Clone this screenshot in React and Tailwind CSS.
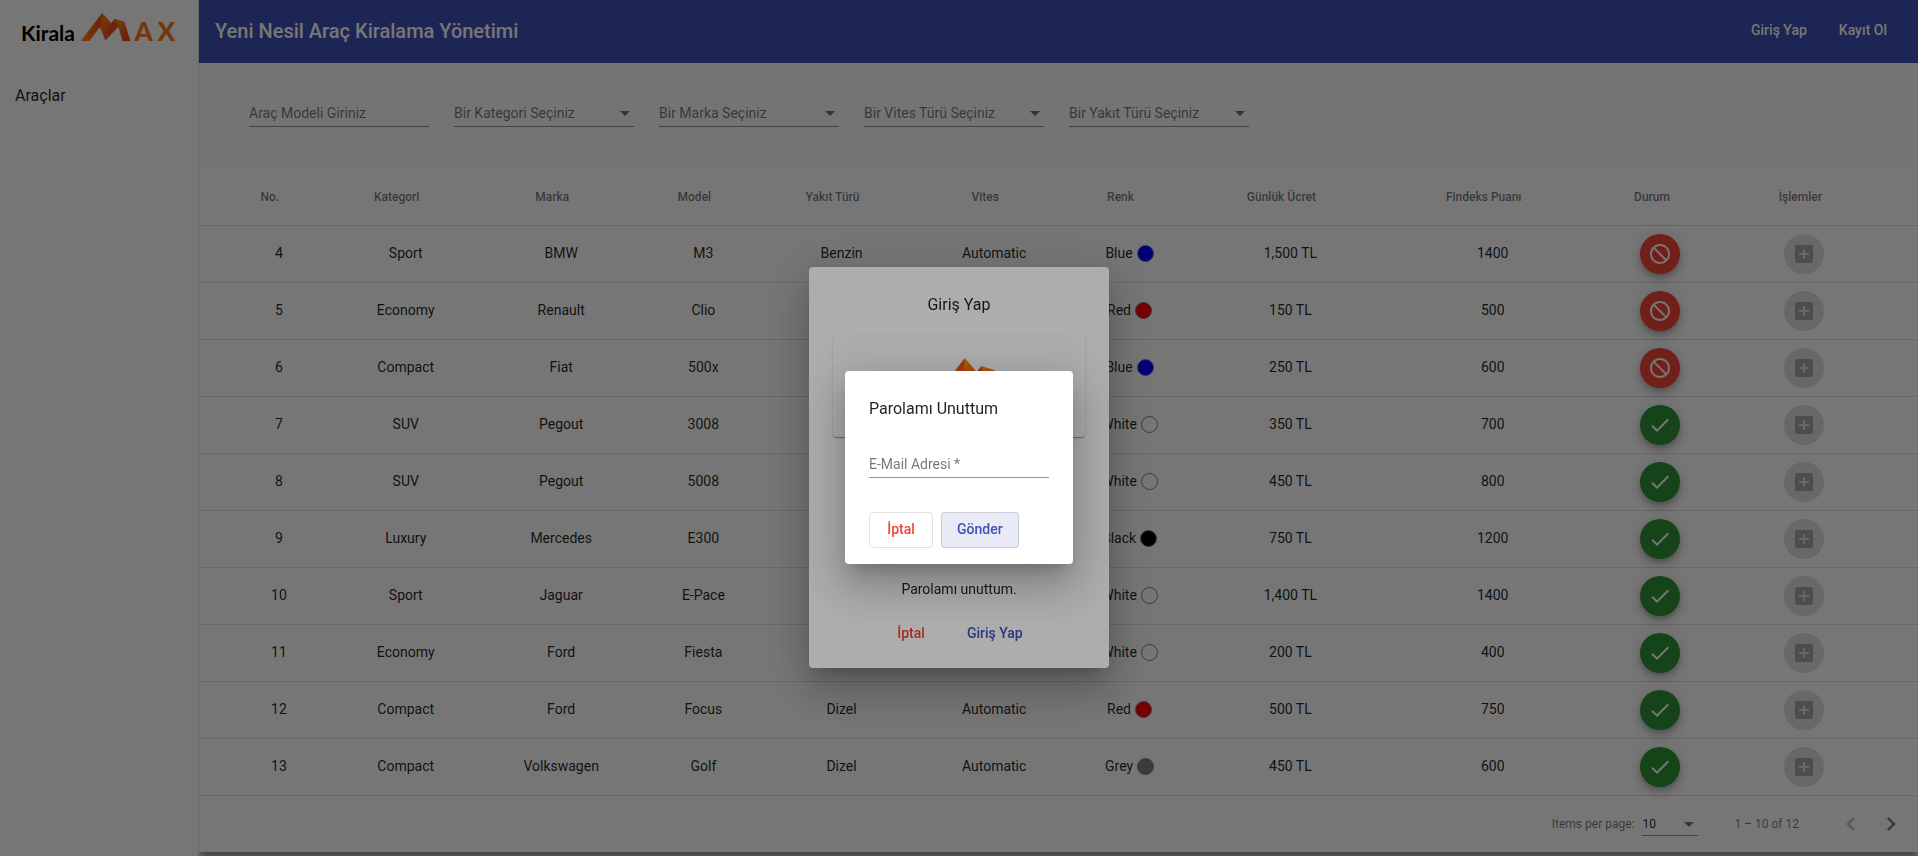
import React from "react";
import { MdAddBox, MdBlock, MdCheck, MdChevronLeft, MdChevronRight } from "react-icons/md";

const cars = [
  { no: 4, category: "Sport", brand: "BMW", model: "M3", fuel: "Benzin", gear: "Automatic", color: "Blue", hex: "#0000ff", price: "1,500 TL", score: 1400, free: false },
  { no: 5, category: "Economy", brand: "Renault", model: "Clio", fuel: "Dizel", gear: "Manual", color: "Red", hex: "#ff0000", price: "150 TL", score: 500, free: false },
  { no: 6, category: "Compact", brand: "Fiat", model: "500x", fuel: "Dizel", gear: "Automatic", color: "Blue", hex: "#0000ff", price: "250 TL", score: 600, free: false },
  { no: 7, category: "SUV", brand: "Pegout", model: "3008", fuel: "Dizel", gear: "Automatic", color: "White", hex: "#ffffff", price: "350 TL", score: 700, free: true },
  { no: 8, category: "SUV", brand: "Pegout", model: "5008", fuel: "Dizel", gear: "Automatic", color: "White", hex: "#ffffff", price: "450 TL", score: 800, free: true },
  { no: 9, category: "Luxury", brand: "Mercedes", model: "E300", fuel: "Benzin", gear: "Automatic", color: "Black", hex: "#000000", price: "750 TL", score: 1200, free: true },
  { no: 10, category: "Sport", brand: "Jaguar", model: "E-Pace", fuel: "Benzin", gear: "Automatic", color: "White", hex: "#ffffff", price: "1,400 TL", score: 1400, free: true },
  { no: 11, category: "Economy", brand: "Ford", model: "Fiesta", fuel: "Dizel", gear: "Manual", color: "White", hex: "#ffffff", price: "200 TL", score: 400, free: true },
  { no: 12, category: "Compact", brand: "Ford", model: "Focus", fuel: "Dizel", gear: "Automatic", color: "Red", hex: "#ff0000", price: "500 TL", score: 750, free: true },
  { no: 13, category: "Compact", brand: "Volkswagen", model: "Golf", fuel: "Dizel", gear: "Automatic", color: "Grey", hex: "#808080", price: "450 TL", score: 600, free: true },
];

const headers = ["No.", "Kategori", "Marka", "Model", "Yakıt Türü", "Vites", "Renk", "Günlük Ücret", "Findeks Puanı", "Durum", "İşlemler"];
const filters = ["Bir Kategori Seçiniz", "Bir Marka Seçiniz", "Bir Vites Türü Seçiniz", "Bir Yakıt Türü Seçiniz"];

function Logo({ className, id }) {
  return (
    <svg viewBox="0 0 156 36" className={"overflow-visible " + className} role="img" aria-label="Kirala MAX">
      <defs>
        <linearGradient id={id + "l"} x1="0" y1="1" x2="1" y2="0">
          <stop offset="0" stopColor="#ff8a10" />
          <stop offset="0.6" stopColor="#f4581a" />
          <stop offset="1" stopColor="#ee4a1c" />
        </linearGradient>
        <linearGradient id={id + "m"} x1="0" y1="0" x2="0.3" y2="1">
          <stop offset="0" stopColor="#ff8c0c" />
          <stop offset="1" stopColor="#f0501c" />
        </linearGradient>
        <linearGradient id={id + "r"} x1="0" y1="0" x2="0.5" y2="1">
          <stop offset="0" stopColor="#ff9010" />
          <stop offset="1" stopColor="#ee4420" />
        </linearGradient>
      </defs>
      <text x="1" y="29" fontSize="21" fontWeight="700" fontFamily="Lato, sans-serif" fill="#000">Kirala</text>
      <path d="M60.700 29 L82.300 0.700 L83 16 L79 16 L69.500 29 Z" fill={`url(#${id}l)`} />
      <path d="M82.300 0.700 L92 12 L85.300 28.500 L80.500 16 Z" fill={`url(#${id}m)`} />
      <path d="M85.300 28.500 L90.500 12 L94.700 6.700 L101 12 Z" fill="#f0501c" />
      <path d="M94.700 6.700 L104.500 9.800 L110.500 29 L102.500 29 L98.500 15 Z" fill={`url(#${id}r)`} />
      <text x="114.500" y="29" fontSize="26" fontWeight="900" fontFamily="Lato, sans-serif" fill="#f5791f">A</text>
      <text x="137.500" y="29" fontSize="26" fontWeight="900" fontFamily="Lato, sans-serif" fill="#f5791f">X</text>
    </svg>
  );
}

function Caret({ className }) {
  return (
    <svg viewBox="0 0 10 5" className={"pointer-events-none absolute h-[5px] w-[10px] " + className} aria-hidden="true">
      <path d="M0 0 H10 L5 5 Z" fill="rgba(0,0,0,0.54)" />
    </svg>
  );
}

function Sidebar() {
  return (
    <aside className="relative z-10 w-[199px] shrink-0 border-r border-black/12 bg-white">
      <a href="#" className="block px-5 pt-3">
        <Logo id="side" className="h-9 w-[156px]" />
      </a>
      <nav className="mt-6">
        <a href="#" className="flex h-12 items-center px-[15px] text-base text-black/87">Araçlar</a>
      </nav>
    </aside>
  );
}

function Filters() {
  return (
    <form className="flex h-[107px] items-start gap-[25px] px-[50px] pt-[37px]">
      <input
        type="text"
        aria-label="Araç Modeli Giriniz"
        placeholder="Araç Modeli Giriniz"
        className="h-[27px] w-[180px] border-b border-black/42 bg-transparent text-sm outline-none placeholder:text-black/54"
      />
      {filters.map((f) => (
        <div key={f} className="relative">
          <select aria-label={f} className="h-[27px] w-[180px] appearance-none border-b border-black/42 bg-transparent text-sm text-black/54">
            <option>{f}</option>
          </select>
          <Caret className="right-1 top-[11px]" />
        </div>
      ))}
    </form>
  );
}

function CarTable() {
  const iconCell = "h-[57px] border-b border-black/12 p-0 last:pr-8";
  const cell = "h-[57px] border-b border-black/12 p-0 pb-0.5 first:pl-6";
  return (
    <table className="w-full border-separate border-spacing-0 text-center text-sm text-black/87">
      <thead>
        <tr>
          {headers.map((h) => (
            <th key={h} className="h-14 border-b border-black/12 p-0 pb-0.5 text-xs font-medium text-black/54 first:pl-6 last:pr-6 nth-last-[-n+2]:pl-0.5">
              <button type="button" className="pr-[18px] whitespace-nowrap">{h}</button>
            </th>
          ))}
        </tr>
      </thead>
      <tbody>
        {cars.map((c) => (
          <tr key={c.no}>
            <td className={cell}>{c.no}</td>
            <td className={cell}>{c.category}</td>
            <td className={cell}>{c.brand}</td>
            <td className={cell}>{c.model}</td>
            <td className={cell}>{c.fuel}</td>
            <td className={cell}>{c.gear}</td>
            <td className={cell}>
              <span className="inline-flex items-center gap-1">
                {c.color}
                <span className="size-[17px] rounded-full border border-[#808080]" style={{ backgroundColor: c.hex }} />
              </span>
            </td>
            <td className={cell}>{c.price}</td>
            <td className={cell}>{c.score}</td>
            <td className={iconCell}>
              <button
                type="button"
                aria-label={c.free ? "Müsait" : "Müsait değil"}
                className={
                  "inline-flex size-10 items-center justify-center rounded-full align-middle text-2xl text-white shadow-[0_3px_5px_-1px_rgba(0,0,0,0.2),0_6px_10px_0_rgba(0,0,0,0.14),0_1px_18px_0_rgba(0,0,0,0.12)] " +
                  (c.free ? "bg-[#2c9434]" : "bg-[#f44336]")
                }
              >
                {c.free ? <MdCheck /> : <MdBlock className="-scale-x-100" />}
              </button>
            </td>
            <td className={iconCell}>
              <button
                type="button"
                disabled
                aria-label="Ekle"
                className="inline-flex size-10 items-center justify-center rounded-full bg-black/12 align-middle text-2xl text-black/26"
              >
                <MdAddBox />
              </button>
            </td>
          </tr>
        ))}
      </tbody>
    </table>
  );
}

function Paginator() {
  return (
    <div className="flex h-14 items-center justify-end pr-[7px] text-xs text-black/54">
      <label htmlFor="page-size" className="mr-2">Items per page:</label>
      <div className="relative mr-9">
        <select id="page-size" className="h-6 w-14 appearance-none border-b border-black/42 bg-transparent text-xs text-black/87">
          <option>10</option>
        </select>
        <Caret className="right-1 top-[10px]" />
      </div>
      <span className="mr-8">1 – 10 of 12</span>
      <button type="button" disabled aria-label="Previous page" className="flex size-10 items-center justify-center text-[28px] text-black/26">
        <MdChevronLeft />
      </button>
      <button type="button" aria-label="Next page" className="flex size-10 items-center justify-center text-[28px] text-black/54">
        <MdChevronRight />
      </button>
    </div>
  );
}

function Modal({ label, className, children }) {
  return (
    <div className="fixed inset-0 z-20 flex items-center justify-center bg-black/32 pt-[79px]">
      <div
        role="dialog"
        aria-label={label}
        className={
          "rounded bg-white text-black/87 shadow-[0_11px_15px_-7px_rgba(0,0,0,0.2),0_24px_38px_3px_rgba(0,0,0,0.14),0_9px_46px_8px_rgba(0,0,0,0.12)] " +
          className
        }
      >
        {children}
      </div>
    </div>
  );
}

function LoginDialog() {
  return (
    <Modal label="Giriş Yap" className="flex min-h-[401px] w-[300px] flex-col items-center px-6 pt-6 pb-[17px]">
      <h2 className="text-base leading-7">Giriş Yap</h2>
      <div className="mt-4 flex h-[102px] w-full justify-center rounded pt-[22px] shadow-[0_2px_1px_-1px_rgba(0,0,0,0.2),0_1px_1px_0_rgba(0,0,0,0.14),0_1px_3px_0_rgba(0,0,0,0.12)]">
        <Logo id="login" className="h-12 w-[208px]" />
      </div>
      <a href="#" className="mt-auto text-sm leading-5">Parolamı unuttum.</a>
      <div className="mt-4 flex gap-2.5 pl-0.5 text-sm font-medium">
        <button type="button" className="h-9 px-4 text-[#f44336]">İptal</button>
        <button type="button" className="h-9 px-4 text-[#3f51b5]">Giriş Yap</button>
      </div>
    </Modal>
  );
}

function ForgotDialog() {
  return (
    <Modal label="Parolamı Unuttum" className="px-6 pt-6 pb-4">
      <h2 className="text-base leading-7">Parolamı Unuttum</h2>
      <input
        type="email"
        aria-label="E-Mail Adresi"
        placeholder="E-Mail Adresi *"
        className="mt-7 block h-[27px] w-[180px] border-b border-black/42 bg-transparent text-sm outline-none placeholder:text-black/54"
      />
      <div className="mt-[34px] flex gap-2 text-sm font-medium">
        <button type="button" className="h-9 w-16 rounded border border-black/12 pb-0.5 text-[#f44336]">İptal</button>
        <button type="button" className="h-9 rounded border border-black/12 bg-[#3f51b5]/12 px-[15px] pb-0.5 text-[#3f51b5]">Gönder</button>
      </div>
    </Modal>
  );
}

export default function App() {
  return (
    <div className="flex min-h-screen overflow-hidden bg-[#fafafa] font-[Roboto,sans-serif]">
      <Sidebar />
      <div className="min-w-0 flex-1">
        <header className="flex h-[63px] items-center justify-between bg-[#3f51b5] pr-[15px] pb-0.5 pl-4 text-white">
          <h1 className="text-xl font-medium">Yeni Nesil Araç Kiralama Yönetimi</h1>
          <div className="flex text-sm font-medium">
            <button type="button" className="h-9 px-4 pb-0.5">Giriş Yap</button>
            <button type="button" className="h-9 px-4 pb-0.5">Kayıt Ol</button>
          </div>
        </header>
        <Filters />
        <main className="bg-white shadow-[0_5px_5px_-3px_rgba(0,0,0,0.2),0_10px_10px_0_rgba(0,0,0,0.2),0_8px_8px_0_rgba(0,0,0,0.12)]">
          <CarTable />
          <Paginator />
        </main>
      </div>
      <LoginDialog />
      <ForgotDialog />
    </div>
  );
}
